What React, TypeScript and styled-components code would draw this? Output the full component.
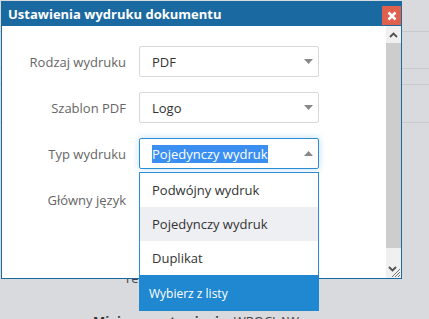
import React from 'react';
import styled, { createGlobalStyle } from 'styled-components';

const GlobalStyle = createGlobalStyle`
  html, body { margin: 0; padding: 0; }
  body {
    width: 429px;
    height: 319px;
    overflow: hidden;
    background: #d9dade;
    font-family: "Open Sans", "Liberation Sans", sans-serif;
    font-size: 13px;
  }
`

const PageStyle = styled.div`
  position: relative;
  width: 429px;
  height: 319px;
  overflow: hidden;
`

const BgRowStyle = styled.div<{ h: number }>`
  height: ${p => p.h}px;
  border-bottom: 1px solid #c9cacf;
`

const BgFooterStyle = styled.div`
  display: flex;
  flex-direction: column;
  padding-top: 146px;
  color: #444;
  line-height: 18px;
`

const BgLineStyle = styled.div<{ indent: number }>`
  padding-left: ${p => p.indent}px;
  height: 18px;
  margin-bottom: 25px;
  & > b { color: #333; }
`

const DialogStyle = styled.div`
  position: absolute;
  top: 1px;
  left: 1px;
  width: 401px;
  height: 278px;
  box-sizing: border-box;
  border: 1px solid #1a6aa1;
  background: #fff;
  display: flex;
  flex-direction: column;
`

const TitleBarStyle = styled.div`
  height: 24px;
  background: #1a6aa1;
  display: flex;
  align-items: center;
  justify-content: space-between;
  padding-left: 6px;
  & > span {
    color: #fff;
    font-weight: bold;
    font-size: 13px;
  }
`

const CloseButtonStyle = styled.div`
  width: 19px;
  height: 19px;
  margin-top: 3px;
  background: #e0604e;
  display: flex;
  align-items: center;
  justify-content: center;
`

const BodyStyle = styled.div`
  flex: 1;
  display: flex;
`

const FormStyle = styled.div`
  flex: 1;
  display: grid;
  grid-template-columns: 124px 180px;
  grid-auto-rows: 31px;
  column-gap: 13px;
  row-gap: 15px;
  padding-top: 20px;
  align-content: start;
`

const LabelStyle = styled.div`
  text-align: right;
  color: #666;
  display: flex;
  align-items: center;
  justify-content: flex-end;
`

const SelectStyle = styled.div<{ focused?: boolean }>`
  position: relative;
  box-sizing: border-box;
  height: 31px;
  border: 1px solid ${p => (p.focused ? '#2a8dd6' : '#d8d8d8')};
  border-radius: 2px;
  box-shadow: ${p => (p.focused ? '0 0 7px rgba(42, 141, 214, 0.3)' : 'none')};
  display: flex;
  align-items: center;
  padding-left: 12px;
  color: #333;
  & > .caret {
    position: absolute;
    right: 5px;
    top: 12px;
  }
`

const SelectedTextStyle = styled.span`
  background: #3a8ff0;
  color: #fff;
  line-height: 18px;
`

const DropdownStyle = styled.div`
  position: absolute;
  top: 33px;
  left: -1px;
  width: 180px;
  box-sizing: border-box;
  border: 1px solid #2a8dd6;
  background: #fff;
  z-index: 10;
`

const OptionStyle = styled.div<{ hover?: boolean }>`
  height: 34px;
  display: flex;
  align-items: center;
  padding-left: 12px;
  color: #333;
  background: ${p => (p.hover ? '#eeeff3' : '#fff')};
`

const ActionOptionStyle = styled.div`
  height: 36px;
  display: flex;
  align-items: center;
  padding-left: 10px;
  font-size: 12px;
  color: #fff;
  background: #1f88d0;
  margin: 0 -1px -1px -1px;
`

const ScrollbarStyle = styled.div`
  width: 15px;
  display: flex;
  flex-direction: column;
  background: #f0f0f0;
`

const ScrollButtonStyle = styled.div`
  height: 17px;
  display: flex;
  align-items: center;
  justify-content: center;
`

const ThumbStyle = styled.div`
  height: 205px;
  background: #cdcdcd;
`

const ScrollEndStyle = styled.div`
  flex: 1;
  display: flex;
  align-items: flex-end;
  justify-content: flex-end;
`

const Caret: React.FC<{ up?: boolean }> = ({ up }) => (
  <svg className="caret" width="9" height="5" viewBox="0 0 9 5">
    <polygon points={up ? '0,5 9,5 4.5,0' : '0,0 9,0 4.5,5'} fill="#888" />
  </svg>
)

const rows = [
  { label: 'Rodzaj wydruku', value: 'PDF' },
  { label: 'Szablon PDF', value: 'Logo' },
]

const options = ['Podwójny wydruk', 'Pojedynczy wydruk', 'Duplikat']

const App: React.FC = () => {
  return <PageStyle>
    <GlobalStyle />
    <BgRowStyle h={31} />
    <BgRowStyle h={36} />
    <BgRowStyle h={15} />
    <BgRowStyle h={37} />
    <BgFooterStyle>
      <BgLineStyle indent={124}>Termin</BgLineStyle>
      <BgLineStyle indent={93}><b>Miejsce wystawienia:</b> WROCŁAW</BgLineStyle>
    </BgFooterStyle>

    <DialogStyle>
      <TitleBarStyle>
        <span>Ustawienia wydruku dokumentu</span>
        <CloseButtonStyle>
          <svg width="10" height="10" viewBox="0 0 10 10">
            <path d="M1.5 1.5 L8.5 8.5 M8.5 1.5 L1.5 8.5" stroke="#fff" strokeWidth="2.6" />
          </svg>
        </CloseButtonStyle>
      </TitleBarStyle>
      <BodyStyle>
        <FormStyle>
          {rows.map(r => (
            <React.Fragment key={r.label}>
              <LabelStyle>{r.label}</LabelStyle>
              <SelectStyle>
                {r.value}
                <Caret />
              </SelectStyle>
            </React.Fragment>
          ))}
          <LabelStyle>Typ wydruku</LabelStyle>
          <SelectStyle focused>
            <SelectedTextStyle>Pojedynczy wydruk</SelectedTextStyle>
            <Caret up />
            <DropdownStyle>
              {options.map(o => (
                <OptionStyle key={o} hover={o === 'Pojedynczy wydruk'}>{o}</OptionStyle>
              ))}
              <ActionOptionStyle>Wybierz z listy</ActionOptionStyle>
            </DropdownStyle>
          </SelectStyle>
          <LabelStyle>Główny język</LabelStyle>
          <SelectStyle />
        </FormStyle>
        <ScrollbarStyle>
          <ScrollButtonStyle>
            <svg width="9" height="6" viewBox="0 0 9 6">
              <path d="M1 5 L4.5 1.5 L8 5" stroke="#505050" strokeWidth="1.8" fill="none" />
            </svg>
          </ScrollButtonStyle>
          <ThumbStyle />
          <ScrollEndStyle>
            <svg width="15" height="15" viewBox="0 0 15 15">
              <path d="M3 4 L6.5 7.5 L10 4" stroke="#505050" strokeWidth="1.8" fill="none" />
              <path d="M6 14 L14 6 M9 14 L14 9 M12 14 L14 12" stroke="#777" strokeWidth="1" />
            </svg>
          </ScrollEndStyle>
        </ScrollbarStyle>
      </BodyStyle>
    </DialogStyle>
  </PageStyle>
}

export default App
